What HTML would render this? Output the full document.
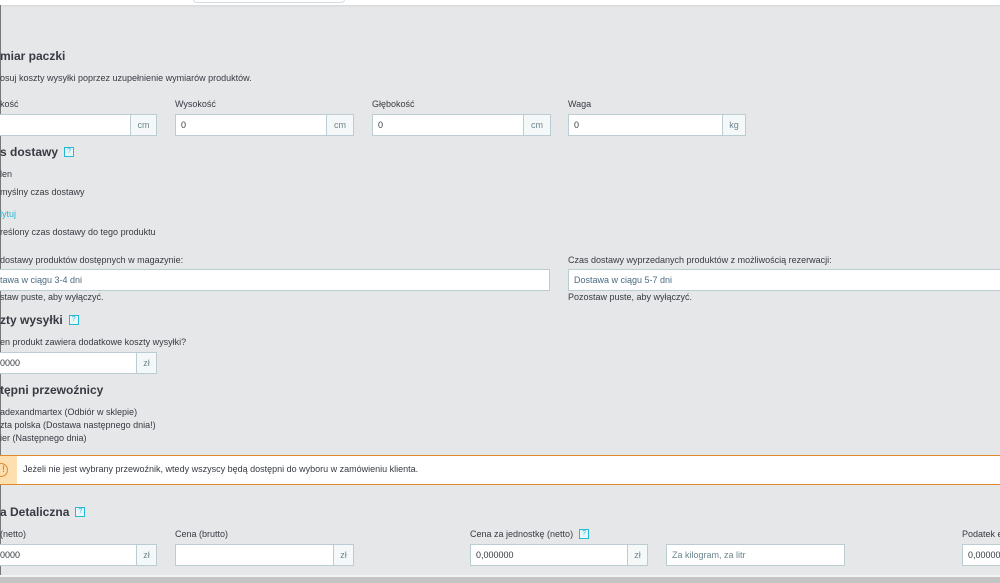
<!DOCTYPE html>
<html><head><meta charset="utf-8"><style>
*{box-sizing:border-box;margin:0;padding:0}
body{width:1000px;height:583px;overflow:hidden;background:#e6e7e9;font-family:"Liberation Sans",sans-serif;color:#363a41;position:relative;font-size:9px}
.a{position:absolute;white-space:nowrap;line-height:12px}
.h{font-weight:bold;font-size:12px;line-height:16px;color:#363a41}
.inp{position:absolute;height:22px;background:#fff;border:1px solid #bbcdd2;font-size:9px;line-height:20px;padding-left:5px;color:#363a41}
.ad{position:absolute;top:0;right:0;height:20px;background:#f5f8f9;border-left:1px solid #bbcdd2;color:#6c868e;text-align:center;line-height:20px}
.q{display:inline-block;vertical-align:middle;width:10px;height:10px;border:1.5px solid #25b9d7;background:#e8f7fa;color:#25b9d7;font-size:7px;line-height:7px;text-align:center;font-weight:normal;margin-left:6px;position:relative;top:-1px}
</style></head><body>
<div style="position:absolute;left:0;top:0;width:1000px;height:5px;background:#fff;box-shadow:0 1px 2px rgba(0,0,0,.08)"></div>
<div style="position:absolute;left:193px;top:-4px;width:152px;height:7px;border:1px solid #d5dde0;border-radius:4px;background:#fff"></div>
<div style="position:absolute;left:0;top:5px;width:1px;height:570px;background:#777"></div>

<div class="a h" style="left:0;top:48px">miar paczki</div>
<div class="a" style="left:0;top:72px">osuj koszty wysyłki poprzez uzupełnienie wymiarów produktów.</div>
<div class="a" style="left:0;top:98px">kość</div>
<div class="a" style="left:175px;top:98px">Wysokość</div>
<div class="a" style="left:372px;top:98px">Głębokość</div>
<div class="a" style="left:568px;top:98px">Waga</div>
<div class="inp" style="left:-2px;top:114px;width:159px"><div class="ad" style="width:26px">cm</div></div>
<div class="inp" style="left:175px;top:114px;width:179px">0<div class="ad" style="width:27px">cm</div></div>
<div class="inp" style="left:372px;top:114px;width:179px">0<div class="ad" style="width:27px">cm</div></div>
<div class="inp" style="left:568px;top:114px;width:178px">0<div class="ad" style="width:23px">kg</div></div>

<div class="a h" style="left:0;top:144px">s dostawy<span class="q">?</span></div>
<div class="a" style="left:0;top:168px">len</div>
<div class="a" style="left:0;top:186px">myślny czas dostawy</div>
<div class="a" style="left:0;top:208px;color:#25b9d7">lytuj</div>
<div class="a" style="left:0;top:226px">reślony czas dostawy do tego produktu</div>
<div class="a" style="left:0;top:254px">dostawy produktów dostępnych w magazynie:</div>
<div class="a" style="left:568px;top:254px">Czas dostawy wyprzedanych produktów z możliwością rezerwacji:</div>
<div class="inp" style="left:-6px;top:269px;width:556px;color:#4b6b80">tawa w ciągu 3-4 dni</div>
<div class="inp" style="left:568px;top:269px;width:440px;color:#4b6b80">Dostawa w ciągu 5-7 dni</div>
<div class="a" style="left:0;top:291px">staw puste, aby wyłączyć.</div>
<div class="a" style="left:568px;top:291px">Pozostaw puste, aby wyłączyć.</div>

<div class="a h" style="left:0;top:312px">zty wysyłki<span class="q">?</span></div>
<div class="a" style="left:0;top:336px">en produkt zawiera dodatkowe koszty wysyłki?</div>
<div class="inp" style="left:-6px;top:352px;width:163px">0000<div class="ad" style="width:20px">zł</div></div>

<div class="a h" style="left:0;top:382px">tępni przewoźnicy</div>
<div class="a" style="left:0;top:406px">adexandmartex (Odbiór w sklepie)</div>
<div class="a" style="left:0;top:419px">zta polska (Dostawa następnego dnia!)</div>
<div class="a" style="left:0;top:432px">ier (Następnego dnia)</div>

<div style="position:absolute;left:-1px;top:455px;width:1005px;height:30px;background:#fff;border:1px solid #e08a2e"></div>
<div style="position:absolute;left:0;top:456px;width:17px;height:28px;background:#fddfb0"></div>
<div style="position:absolute;left:-6px;top:463px;width:14px;height:14px;border:1.5px solid #e08a2e;border-radius:50%;color:#e08a2e;font-size:9px;line-height:11px;text-align:right;padding-right:2px;font-weight:bold">!</div>
<div class="a" style="left:23px;top:463px">Jeżeli nie jest wybrany przewoźnik, wtedy wszyscy będą dostępni do wyboru w zamówieniu klienta.</div>

<div class="a h" style="left:0;top:504px">a Detaliczna<span class="q">?</span></div>
<div class="a" style="left:0;top:528px">(netto)</div>
<div class="a" style="left:175px;top:528px">Cena (brutto)</div>
<div class="a" style="left:470px;top:528px">Cena za jednostkę (netto)<span class="q">?</span></div>
<div class="a" style="left:962px;top:528px">Podatek e</div>
<div class="inp" style="left:-6px;top:544px;width:163px">0000<div class="ad" style="width:20px">zł</div></div>
<div class="inp" style="left:175px;top:544px;width:179px"><div class="ad" style="width:20px">zł</div></div>
<div class="inp" style="left:470px;top:544px;width:178px">0,000000<div class="ad" style="width:20px">zł</div></div>
<div class="inp" style="left:666px;top:544px;width:179px;color:#6c868e">Za kilogram, za litr</div>
<div class="inp" style="left:962px;top:544px;width:60px">0,000000</div>

<div style="position:absolute;left:0;top:575px;width:1000px;height:2px;background:#f4f4f4"></div>
<div style="position:absolute;left:0;top:577px;width:1000px;height:6px;background:#c4c4c4"></div>
</body></html>
